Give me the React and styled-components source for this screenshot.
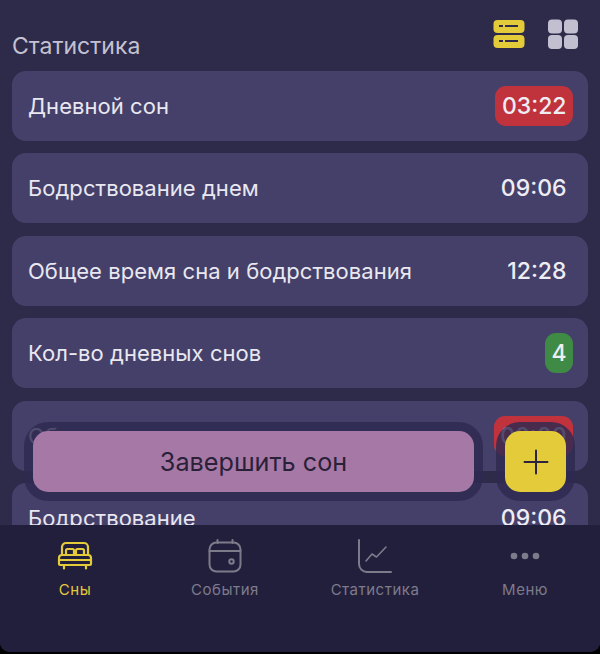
import React from "react";
import styled, { createGlobalStyle } from "styled-components";

const rows = [
  { id: 1, title: "Дневной сон", value: "03:22", tone: "red" },
  { id: 2, title: "Бодрствование днем", value: "09:06" },
  { id: 3, title: "Общее время сна и бодрствования", value: "12:28" },
  { id: 4, title: "Кол-во дневных снов", value: "4", tone: "green" },
  { id: 5, title: "Общее время сна", value: "00:00", tone: "red" },
  { id: 6, title: "Бодрствование", value: "09:06" },
];

function BedIcon() {
  return (
    <svg width="36" height="30" viewBox="0 0 36 30" fill="none" stroke="#e3cb3a" strokeWidth="2.2" strokeLinejoin="round" strokeLinecap="round">
      <path d="M5 14V6a4 4 0 0 1 4-4h18a4 4 0 0 1 4 4v8" />
      <path d="M9 13V9.5A1.5 1.5 0 0 1 10.5 8h5A1.5 1.5 0 0 1 17 9.5V13" />
      <path d="M19 13V9.5A1.5 1.5 0 0 1 20.5 8h5A1.5 1.5 0 0 1 27 9.5V13" />
      <path d="M5 14h26a3 3 0 0 1 3 3v6a1 1 0 0 1-1 1H3a1 1 0 0 1-1-1v-6a3 3 0 0 1 3-3z" />
      <path d="M2 19h32M7 24v3.5M29 24v3.5" />
    </svg>
  );
}

function CalendarIcon() {
  return (
    <svg width="34" height="34" viewBox="0 0 34 34" fill="none" stroke="#7d7b8a" strokeWidth="2" strokeLinecap="round">
      <rect x="1.5" y="3.5" width="31" height="29" rx="7" />
      <path d="M1.5 12h31M9.5 1v3M24.5 1v3" />
      <circle cx="23.5" cy="22.5" r="2.2" />
    </svg>
  );
}

function ChartIcon() {
  return (
    <svg width="36" height="36" viewBox="0 0 36 36" fill="none" stroke="#7d7b8a" strokeWidth="2" strokeLinecap="round" strokeLinejoin="round">
      <path d="M2 2v24a8 8 0 0 0 8 8h24" />
      <path d="M9 23l6-7 4.500 3L29 9" strokeWidth="1.6" />
    </svg>
  );
}

function DotsIcon() {
  return (
    <svg width="30" height="8" viewBox="0 0 30 8" fill="#7d7b8a">
      <circle cx="4" cy="4" r="3.300" />
      <circle cx="15" cy="4" r="3.300" />
      <circle cx="26" cy="4" r="3.300" />
    </svg>
  );
}

function ListViewIcon() {
  return (
    <svg width="32" height="30" viewBox="0 0 32 30" fill="#e3cb3a">
      <rect x="0.500" y="1" width="31" height="13" rx="4" />
      <rect x="0.500" y="16" width="31" height="13" rx="4" />
      <path d="M6 7h4M12 7h13M6 22h4M12 22h13" stroke="#2e2a4a" strokeWidth="2.200" />
    </svg>
  );
}

function GridViewIcon() {
  return (
    <svg width="32" height="30" viewBox="0 0 32 30" fill="#c2c0d0">
      <rect x="1" y="0.500" width="14" height="14" rx="4" />
      <rect x="17" y="0.500" width="14" height="14" rx="4" />
      <rect x="1" y="16" width="14" height="14" rx="4" />
      <rect x="17" y="16" width="14" height="14" rx="4" />
    </svg>
  );
}

const tabs = [
  { id: "sleep", label: "Сны", icon: <BedIcon />, active: true },
  { id: "events", label: "События", icon: <CalendarIcon /> },
  { id: "stats", label: "Статистика", icon: <ChartIcon /> },
  { id: "menu", label: "Меню", icon: <DotsIcon /> },
];

function App() {
  return (
    <>
      <GlobalStyle />
      <Screen>
        <Content>
          <Header>
            <Heading>Статистика</Heading>
            <ViewSwitch>
              <ListViewIcon />
              <GridViewIcon />
            </ViewSwitch>
          </Header>
          <List>
            {rows.map((row) => (
              <Row key={row.id}>
                <RowTitle>{row.title}</RowTitle>
                <Value $tone={row.tone}>{row.value}</Value>
              </Row>
            ))}
          </List>
          <Actions>
            <FinishButton>Завершить сон</FinishButton>
            <AddButton aria-label="Добавить">
              <svg width="26" height="26" viewBox="0 0 26 26" stroke="#2c2340" strokeWidth="2" strokeLinecap="round">
                <path d="M13 1.500v23M1.500 13h23" />
              </svg>
            </AddButton>
          </Actions>
        </Content>
        <TabBar>
          {tabs.map((tab) => (
            <Tab key={tab.id}>
              <TabIcon>{tab.icon}</TabIcon>
              <TabLabel $active={tab.active}>{tab.label}</TabLabel>
            </Tab>
          ))}
        </TabBar>
      </Screen>
    </>
  );
}

const GlobalStyle = createGlobalStyle`
  html, body {
    margin: 0;
    padding: 0;
    background: #000;
  }
  * {
    box-sizing: border-box;
  }
`;

const Screen = styled.div`
  width: 600px;
  height: 652px;
  display: flex;
  flex-direction: column;
  overflow: hidden;
  border-radius: 0 0 10px 10px;
  background: #2e2a4a;
  font-family: Inter, "Noto Sans", sans-serif;
`;

const Content = styled.div`
  position: relative;
  flex: 1;
  min-height: 0;
  overflow: hidden;
  padding: 0 12px;
`;

const Header = styled.div`
  height: 71px;
  display: flex;
  justify-content: space-between;
  padding: 19px 9px 0 0;
`;

const Heading = styled.h2`
  margin: 15px 0 0;
  font-size: 23px;
  line-height: 24px;
  font-weight: 400;
  color: #c4c2d2;
`;

const ViewSwitch = styled.div`
  display: flex;
  gap: 22px;
  height: 30px;
`;

const List = styled.div`
  display: flex;
  flex-direction: column;
  gap: 12.400px;
`;

const Row = styled.div`
  height: 70px;
  flex: none;
  display: flex;
  align-items: center;
  justify-content: space-between;
  padding: 0 15px 0 16px;
  border-radius: 14px;
  background: #45406a;
`;

const RowTitle = styled.span`
  font-size: 22px;
  letter-spacing: 0.05px;
  color: #e9e8f0;
`;

const Value = styled.span`
  min-height: 40px;
  display: flex;
  align-items: center;
  padding: 0 6.500px;
  border-radius: 11px;
  font-size: 23px;
  font-weight: 500;
  color: #eeedf4;
  background: ${(p) =>
    p.$tone === "red" ? "#c0323c" : p.$tone === "green" ? "#3f8a45" : "transparent"};
`;

const Actions = styled.div`
  position: absolute;
  left: 33px;
  right: 34px;
  top: 431px;
  display: flex;
  gap: 31px;
`;

const ringedButton = `
  height: 61px;
  border: none;
  border-radius: 15px;
  box-shadow: 0 0 0 9px rgba(46, 42, 80, 0.82);
  color: #2a2038;
  font-family: inherit;
`;

const FinishButton = styled.button`
  ${ringedButton}
  flex: 1;
  background: #a678a6;
  font-size: 25.200px;
`;

const AddButton = styled.button`
  ${ringedButton}
  width: 61px;
  flex: none;
  display: flex;
  align-items: center;
  justify-content: center;
  padding: 0;
  background: #e3cb3a;
`;

const TabBar = styled.nav`
  height: 127px;
  flex: none;
  display: grid;
  grid-template-columns: repeat(4, 1fr);
  background: #221f3d;
`;

const Tab = styled.div`
  display: flex;
  flex-direction: column;
  align-items: center;
  padding-top: 13px;
`;

const TabIcon = styled.div`
  height: 36px;
  display: flex;
  align-items: center;
  justify-content: center;
`;

const TabLabel = styled.span`
  margin-top: 6px;
  font-size: 15px;
  line-height: 20px;
  letter-spacing: 0.5px;
  color: ${(p) => (p.$active ? "#e3cb3a" : "#7d7b8a")};
`;

export default App;
